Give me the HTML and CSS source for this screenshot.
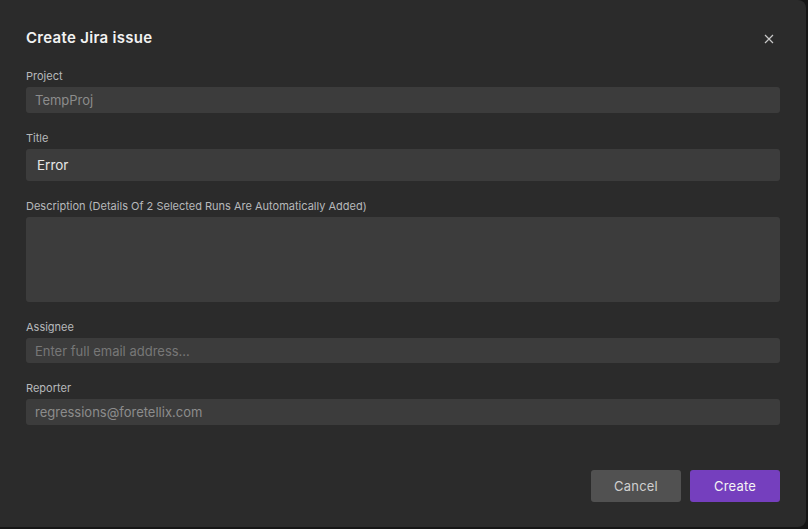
FILE: index.html
```html
<!DOCTYPE html>
<html lang="en">
<head>
	<meta charset="UTF-8">
	<title>Create Jira issue</title>
	<link rel="stylesheet" href="styles.css">
</head>
<body>
	<div class="dialog">
		<div class="head">
			<span class="head_title">Create Jira issue</span>
			<span class="close">
				<svg width="10" height="10" viewBox="0 0 10 10"><path d="M1 1L9 9M9 1L1 9" stroke="#c8c8c8" stroke-width="1.2" fill="none"/></svg>
			</span>
		</div>
		<form class="fields">
			<div class="field">
				<label class="label">Project</label>
				<div class="input short muted">TempProj</div>
			</div>
			<div class="field">
				<label class="label">Title</label>
				<div class="input tall">Error</div>
			</div>
			<div class="field">
				<label class="label">Description (Details Of 2 Selected Runs Are Automatically Added)</label>
				<div class="input area"></div>
			</div>
			<div class="field">
				<label class="label">Assignee</label>
				<div class="input short thin placeholder">Enter full email address...</div>
			</div>
			<div class="field">
				<label class="label">Reporter</label>
				<div class="input short muted">regressions@foretellix.com</div>
			</div>
		</form>
		<div class="btns">
			<div class="btn cancel">Cancel</div>
			<div class="btn create">Create</div>
		</div>
	</div>
</body>
</html>
```

FILE: styles.css
```css
html{
	font-family: Inter, "Noto Sans", sans-serif;
}
body{
	margin: 0;
	padding: 0;
	background: #161616;
	width: 808px;
	height: 529px;
	overflow: hidden;
}
.dialog {
	width: 806px;
	height: 527px;
	box-sizing: border-box;
	background: #2b2b2b;
	border-radius: 0 8px 8px 0;
	padding: 27px 26px 0 26px;
	display: flex;
	flex-flow: column nowrap;
}
.head {
	height: 20px;
	display: flex;
	justify-content: space-between;
	align-items: center;
}
.head_title {
	color: #f2f2f2;
	font-size: 15px;
	font-weight: 600;
	letter-spacing: 0.3px;
}
.close {
	display: flex;
	margin-right: 6px;
	margin-top: 4px;
}
.fields {
	margin: 22px 0 0 0;
	display: flex;
	flex-flow: column nowrap;
	gap: 18px;
}
.field {
	display: flex;
	flex-flow: column nowrap;
	gap: 4px;
}
.label {
	font-size: 11px;
	line-height: 14px;
	color: #b7b9bb;
}
.input {
	background: #3c3c3c;
	border-radius: 3px;
	box-sizing: border-box;
	font-size: 13px;
	display: flex;
	align-items: center;
	padding: 0 9px;
	color: #e6e6e6;
}
.short {
	height: 26px;
}
.thin {
	height: 25px;
}
.tall {
	height: 32px;
	padding: 0 11px;
	font-size: 13.5px;
}
.area {
	height: 85px;
}
.muted {
	color: #8c8c8c;
}
.placeholder {
	color: #777777;
}
.btns {
	margin-top: 45px;
	display: flex;
	justify-content: flex-end;
	gap: 9px;
}
.btn {
	width: 90px;
	height: 32px;
	border-radius: 3px;
	display: flex;
	justify-content: center;
	align-items: center;
	font-size: 13px;
	letter-spacing: 0.2px;
}
.cancel {
	background: #515151;
	color: #cfcfcf;
}
.create {
	background: #753fbe;
	color: #f4f4f4;
}
```
